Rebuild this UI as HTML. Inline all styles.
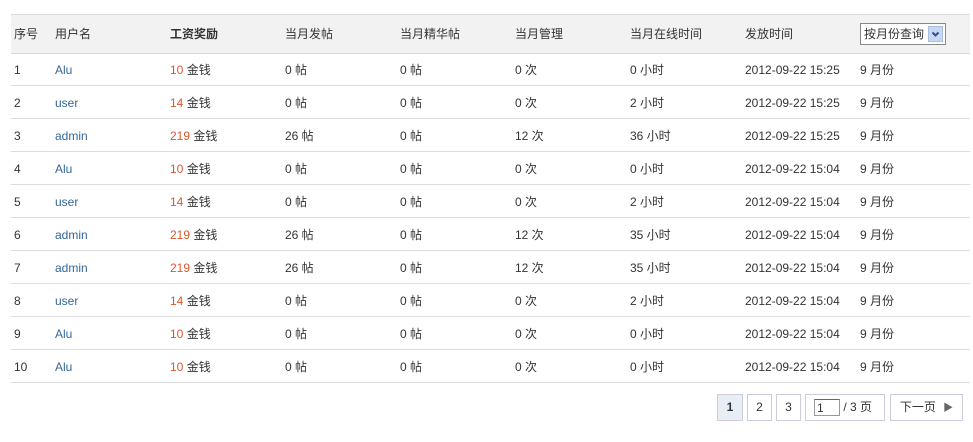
<!DOCTYPE html>
<html><head><meta charset="utf-8"><style>
body{margin:0;background:#fff;font-family:"Liberation Sans","Noto Sans CJK SC",sans-serif;font-size:12px;color:#333;width:973px;height:442px;position:relative;overflow:hidden}
.hd{position:absolute;left:11px;top:14px;width:959px;height:38px;background:#f2f2f2;border-top:1px solid #ddd;border-bottom:1px solid #d8d8d8}
.row{position:absolute;left:11px;width:959px;height:32px;border-bottom:1px solid #ddd}
.c{position:absolute;top:1px;line-height:32px;white-space:nowrap}
.hd .c{line-height:38px;top:0}
a{color:#336699;text-decoration:none}
.r{color:#e0542c}
.sel{position:absolute;left:849px;top:8px;width:86px;height:22px;border:1px solid #888;background:#fff;box-sizing:border-box;line-height:20px;padding-left:3px;font-size:12px}
.sel i{position:absolute;right:2px;top:2px;width:15px;height:16px;background:#c8d8f0;border:1px solid #a8bde0;box-sizing:border-box}
.pg{position:absolute;top:394px;height:27px;border:1px solid #ccd;box-sizing:border-box;line-height:25px;text-align:center;font-size:12px;background:#fff}
</style></head><body>
<div class="hd">
<span class="c" style="left:3px">序号</span><span class="c" style="left:44px">用户名</span><span class="c" style="left:159px;font-weight:bold">工资奖励</span><span class="c" style="left:274px">当月发帖</span><span class="c" style="left:389px">当月精华帖</span><span class="c" style="left:504px">当月管理</span><span class="c" style="left:619px">当月在线时间</span><span class="c" style="left:734px">发放时间</span>
<div class="sel">按月份查询<i><svg width="13" height="14" viewBox="0 0 13 14"><path d="M3.5 5.5l3 3 3-3" stroke="#2a4f9a" stroke-width="2" fill="none"/></svg></i></div>
</div>
<div id="rows"></div>
<div class="pg" style="left:717px;width:26px;background:#e8eef5;font-weight:bold">1</div>
<div class="pg" style="left:747px;width:25px">2</div>
<div class="pg" style="left:776px;width:25px">3</div>
<div class="pg" style="left:805px;width:80px;text-align:left;padding-left:8px"><span style="display:inline-block;width:26px;height:17px;border:1px solid #999;border-top-color:#666;vertical-align:middle;line-height:17px;box-sizing:border-box;padding-left:2px">1</span> / 3 页</div>
<div class="pg" style="left:890px;width:73px">下一页 <span style="color:#666;font-size:10px;margin-left:4px">▶</span></div>
<script>
var d=[[1,"Alu",10,0,0,0,0,"15:25"],[2,"user",14,0,0,0,2,"15:25"],[3,"admin",219,26,0,12,36,"15:25"],[4,"Alu",10,0,0,0,0,"15:04"],[5,"user",14,0,0,0,2,"15:04"],[6,"admin",219,26,0,12,35,"15:04"],[7,"admin",219,26,0,12,35,"15:04"],[8,"user",14,0,0,0,2,"15:04"],[9,"Alu",10,0,0,0,0,"15:04"],[10,"Alu",10,0,0,0,0,"15:04"]];
var h="";d.forEach(function(r,i){h+='<div class="row" style="top:'+(53+i*33)+'px"><span class="c" style="left:3px">'+r[0]+'</span><span class="c" style="left:44px"><a>'+r[1]+'</a></span><span class="c" style="left:159px"><span class="r">'+r[2]+'</span> 金钱</span><span class="c" style="left:274px">'+r[3]+' 帖</span><span class="c" style="left:389px">'+r[4]+' 帖</span><span class="c" style="left:504px">'+r[5]+' 次</span><span class="c" style="left:619px">'+r[6]+' 小时</span><span class="c" style="left:734px">2012-09-22 '+r[7]+'</span><span class="c" style="left:849px">9 月份</span></div>';});
document.getElementById("rows").innerHTML=h;
</script>
</body></html>
